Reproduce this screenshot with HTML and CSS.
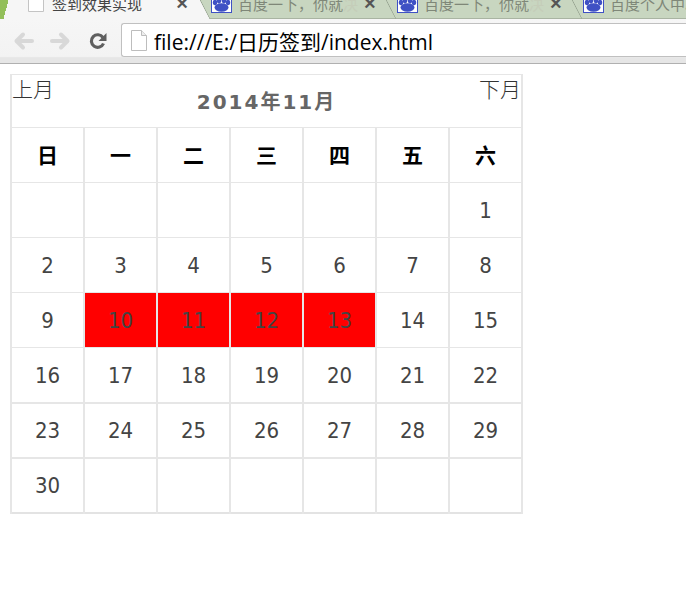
FILE: index.html
```html
<!DOCTYPE html>
<html>

<head>
    <meta charset='utf-8'>
    <title>签到效果实现</title>
    <link rel="stylesheet" href="styles.css">
</head>

<body>
    <svg class="defs" width="0" height="0">
        <symbol id="paw" viewBox="0 0 21 20">
            <rect x=".5" y=".5" width="20" height="19" fill="#fff" stroke="#3f51c4"/>
            <g fill="#3f51c4">
                <ellipse cx="10.5" cy="14.5" rx="7" ry="4.2"/>
                <ellipse cx="4" cy="9.5" rx="2.2" ry="2.8"/>
                <ellipse cx="8" cy="7" rx="2.3" ry="3.4"/>
                <ellipse cx="13" cy="7" rx="2.3" ry="3.4"/>
                <ellipse cx="17" cy="9.5" rx="2.2" ry="2.8"/>
            </g>
        </symbol>
    </svg>

    <div class="tabbar">
        <div class="tab_corner"></div>
        <div class="tab_active">
            <svg class="page_icon" width="16" height="16" viewBox="0 0 16 16"><path d="M.5 .5h15v15H.5z" fill="#fff" stroke="#c4c4c4"/></svg>
            <span class="tab_title">签到效果实现</span>
            <span class="tab_close">×</span>
        </div>
        <div class="tab tab_second">
            <svg class="paw_icon" width="21" height="20"><use href="#paw"/></svg>
            <span class="tab_title">百度一下，你就<i>决</i></span>
            <span class="tab_close">×</span>
        </div>
        <div class="tab">
            <svg class="paw_icon" width="21" height="20"><use href="#paw"/></svg>
            <span class="tab_title">百度一下，你就<i>决</i></span>
            <span class="tab_close">×</span>
        </div>
        <div class="tab">
            <svg class="paw_icon" width="21" height="20"><use href="#paw"/></svg>
            <span class="tab_title">百度个人中心</span>
        </div>
    </div>
    <div class="toolbar">
        <svg class="nav_icon" width="22" height="20" viewBox="0 0 22 20"><path d="M19 10H4M10 3.5 3.5 10l6.5 6.5" fill="none" stroke="#d8d8d8" stroke-width="4" stroke-linecap="round" stroke-linejoin="round"/></svg>
        <svg class="nav_icon" width="22" height="20" viewBox="0 0 22 20"><path d="M3 10h15M12 3.5l6.500 6.500-6.500 6.500" fill="none" stroke="#d8d8d8" stroke-width="4" stroke-linecap="round" stroke-linejoin="round"/></svg>
        <svg class="reload" width="20" height="20" viewBox="0 0 20 20"><path d="M15.500 12.500a6.300 6.300 0 1 1-.6-6" fill="none" stroke="#5f5f5f" stroke-width="3.200"/><path d="M18.500 2v8h-8z" fill="#5f5f5f"/></svg>
        <div class="address">
            <svg width="16" height="21" viewBox="0 0 16 21"><path d="M.5 .5h10l5 5v15H.5z" fill="#fff" stroke="#bdbdbd"/><path d="M10.500 .5v5h5" fill="#eee" stroke="#bdbdbd"/></svg>
            <span>file:///E:/日历签到/index.html</span>
        </div>
    </div>

    <table class="calendar">
        <tr class="head_row">
            <td colspan="7">
                <a class="prev">上月</a>
                <a class="next">下月</a>
                <h2>2014年11月</h2>
            </td>
        </tr>
        <tr class="week_row">
            <th>日</th><th>一</th><th>二</th><th>三</th><th>四</th><th>五</th><th>六</th>
        </tr>
        <tr><td></td><td></td><td></td><td></td><td></td><td></td><td>1</td></tr>
        <tr><td>2</td><td>3</td><td>4</td><td>5</td><td>6</td><td>7</td><td>8</td></tr>
        <tr><td>9</td><td class="signed">10</td><td class="signed">11</td><td class="signed">12</td><td class="signed">13</td><td>14</td><td>15</td></tr>
        <tr class="low_row"><td>16</td><td>17</td><td>18</td><td>19</td><td>20</td><td>21</td><td>22</td></tr>
        <tr class="wide_row"><td>23</td><td>24</td><td>25</td><td>26</td><td>27</td><td>28</td><td>29</td></tr>
        <tr class="wide_row last_row"><td>30</td><td></td><td></td><td></td><td></td><td></td><td></td></tr>
    </table>
</body>

</html>
```

FILE: styles.css
```css
* {
    margin: 0;
    padding: 0;
    box-sizing: border-box;
}

html,
body {
    height: 593px;
    overflow: hidden;
}

body {
    background-color: white;
    font-family: "DejaVu Sans", "Noto Sans CJK SC", sans-serif;
}

.defs {
    display: block;
    height: 0;
}

.tabbar {
    display: flex;
    align-items: flex-start;
    height: 19px;
    overflow: hidden;
    background: linear-gradient(#c8d6c0 18px, #a9b4a2 18px);
    font-family: "Liberation Sans", "Noto Sans CJK SC", sans-serif;
    font-size: 15px;
}

.tab_corner {
    flex: none;
    width: 12px;
    height: 19px;
    background: linear-gradient(105deg, #93bf5a 50%, #f6f6f6 50%);
}

.tab_active,
.tab {
    display: flex;
    align-items: center;
    flex: none;
    height: 31px;
    margin-top: -12px;
}

.tab_active {
    gap: 8px;
    width: 198px;
    padding-left: 16px;
    background-color: #f6f6f6;
    clip-path: polygon(0 0, calc(100% - 16px) 0, 100% 100%, 0 100%);
    color: #444;
}

.tab_active .tab_close {
    margin-right: 22px;
}

.tab {
    position: relative;
    gap: 6px;
    width: 186px;
    padding-left: 17px;
    color: #7f8778;
}

.tab::before {
    content: "";
    position: absolute;
    top: 0;
    left: 0;
    width: 16px;
    height: 31px;
    background: linear-gradient(to top right, transparent calc(50% - 0.7px), #98a592 50%, transparent calc(50% + 0.7px));
}

.tab_second {
    margin-left: -16px;
}

.page_icon,
.paw_icon {
    flex: none;
}

.paw_icon {
    margin-top: -2px;
}

.tab_title {
    flex: 1;
    white-space: nowrap;
}

.tab_title i {
    font-style: normal;
    color: #c5cdb9;
}

.tab_close {
    margin-right: 12px;
    color: #555;
    font-size: 20px;
    font-weight: bold;
}

.toolbar {
    display: flex;
    align-items: center;
    height: 45px;
    padding: 0 0 2px 13px;
    background: linear-gradient(#f6f6f6, #f3f3f3 85%, #e6e6e6 88%);
    border-bottom: 1px solid #b0b0b0;
}

.nav_icon {
    margin: 2px 14px 0 0;
}

.reload {
    margin: 2px 13px 0 3px;
}

.address {
    display: flex;
    align-items: center;
    gap: 7px;
    flex: 1;
    height: 34px;
    padding-left: 9px;
    background-color: white;
    border: 1px solid #c0c0c0;
    border-right: none;
    border-radius: 3px 0 0 3px;
    color: black;
    font-family: "Open Sans", "Noto Sans CJK SC", sans-serif;
    font-size: 21px;
}

.address span {
    padding-top: 2px;
}

.calendar {
    width: 513px;
    margin: 10px 0 0 10px;
    table-layout: fixed;
    border-collapse: collapse;
    border: 2px solid #e3e3e3;
    border-top-width: 1px;
    color: #444;
    font-family: "DejaVu Sans Condensed", "DejaVu Sans", sans-serif;
    font-size: 22px;
    text-align: center;
}

.calendar td,
.calendar th {
    height: 55px;
    border: 1px solid #e6e6e6;
    border-left-width: 2px;
    border-right-width: 2px;
}

.calendar .low_row td {
    padding-top: 2px;
}

.calendar .wide_row td {
    border-top-width: 2px;
}

.calendar .last_row td {
    padding-top: 1px;
}

.head_row td {
    height: 53px;
    font-size: 0;
    vertical-align: top;
}

.prev,
.next {
    color: #333;
    font-family: "Noto Sans CJK SC", sans-serif;
    font-size: 21px;
    font-weight: 300;
    line-height: 26px;
}

.prev {
    float: left;
}

.next {
    float: right;
}

h2 {
    padding-top: 14px;
    color: #666;
    font-family: "DejaVu Sans", "Noto Sans CJK SC", sans-serif;
    font-size: 20px;
    font-weight: bold;
    letter-spacing: 2px;
    line-height: 26px;
}

.calendar .week_row th {
    padding-bottom: 2px;
    color: black;
    font-family: "Noto Sans CJK SC", sans-serif;
    font-size: 21px;
}

.calendar .signed {
    background-color: red;
}
```
